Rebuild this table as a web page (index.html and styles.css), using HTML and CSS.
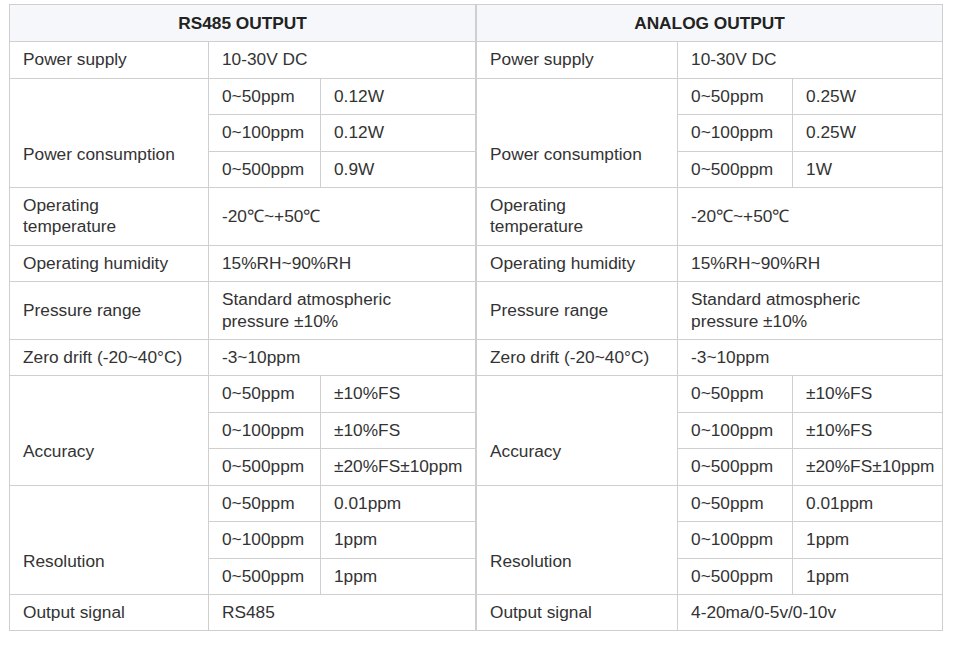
FILE: index.html
```html
<!DOCTYPE html>
<html>
<head>
<meta charset="utf-8">
<link rel="stylesheet" href="styles.css">
</head>
<body>
<div class="wrap">
  <table class="spec spec-left">
    <colgroup><col class="c1l"><col class="c2l"><col class="c3l"></colgroup>
    <thead>
      <tr><th colspan="3">RS485 OUTPUT</th></tr>
    </thead>
    <tbody>
      <tr><td>Power supply</td><td colspan="2">10-30V DC</td></tr>
      <tr><td rowspan="3" class="low">Power consumption</td><td>0~50ppm</td><td>0.12W</td></tr>
      <tr><td>0~100ppm</td><td>0.12W</td></tr>
      <tr><td>0~500ppm</td><td>0.9W</td></tr>
      <tr><td>Operating temperature</td><td colspan="2">-20℃~+50℃</td></tr>
      <tr><td>Operating humidity</td><td colspan="2">15%RH~90%RH</td></tr>
      <tr><td>Pressure range</td><td colspan="2">Standard atmospheric pressure ±10%</td></tr>
      <tr><td>Zero drift (-20~40°C)</td><td colspan="2">-3~10ppm</td></tr>
      <tr><td rowspan="3" class="low">Accuracy</td><td>0~50ppm</td><td>±10%FS</td></tr>
      <tr><td>0~100ppm</td><td>±10%FS</td></tr>
      <tr><td>0~500ppm</td><td>±20%FS±10ppm</td></tr>
      <tr><td rowspan="3" class="low">Resolution</td><td>0~50ppm</td><td>0.01ppm</td></tr>
      <tr><td>0~100ppm</td><td>1ppm</td></tr>
      <tr><td>0~500ppm</td><td>1ppm</td></tr>
      <tr><td>Output signal</td><td colspan="2">RS485</td></tr>
    </tbody>
  </table>
  <table class="spec spec-right">
    <colgroup><col class="c1r"><col class="c2r"><col class="c3r"></colgroup>
    <thead>
      <tr><th colspan="3">ANALOG OUTPUT</th></tr>
    </thead>
    <tbody>
      <tr><td>Power supply</td><td colspan="2">10-30V DC</td></tr>
      <tr><td rowspan="3" class="low">Power consumption</td><td>0~50ppm</td><td>0.25W</td></tr>
      <tr><td>0~100ppm</td><td>0.25W</td></tr>
      <tr><td>0~500ppm</td><td>1W</td></tr>
      <tr><td>Operating temperature</td><td colspan="2">-20℃~+50℃</td></tr>
      <tr><td>Operating humidity</td><td colspan="2">15%RH~90%RH</td></tr>
      <tr><td>Pressure range</td><td colspan="2">Standard atmospheric pressure ±10%</td></tr>
      <tr><td>Zero drift (-20~40°C)</td><td colspan="2">-3~10ppm</td></tr>
      <tr><td rowspan="3" class="low">Accuracy</td><td>0~50ppm</td><td>±10%FS</td></tr>
      <tr><td>0~100ppm</td><td>±10%FS</td></tr>
      <tr><td>0~500ppm</td><td>±20%FS±10ppm</td></tr>
      <tr><td rowspan="3" class="low">Resolution</td><td>0~50ppm</td><td>0.01ppm</td></tr>
      <tr><td>0~100ppm</td><td>1ppm</td></tr>
      <tr><td>0~500ppm</td><td>1ppm</td></tr>
      <tr><td>Output signal</td><td colspan="2">4-20ma/0-5v/0-10v</td></tr>
    </tbody>
  </table>
</div>
</body>
</html>
```

FILE: styles.css
```css
html, body {
  margin: 0;
  padding: 0;
  background: #ffffff;
}

body {
  font-family: "Liberation Sans", Arial, sans-serif;
  font-size: 17.3px;
  color: #333333;
}

.wrap {
  display: flex;
  align-items: flex-start;
  padding: 4px 0 0 9px;
}

.spec {
  border-collapse: collapse;
  table-layout: fixed;
  border: 1px solid #cfcfcf;
}

.spec-left { width: 466px; }
.spec-right { width: 466px; }

.c1l { width: 199px; }
.c2l { width: 112px; }
.c3l { width: 155px; }

.c1r { width: 201px; }
.c2r { width: 115px; }
.c3r { width: 150px; }

.spec th,
.spec td {
  border: 1px solid #cfcfcf;
  padding: 7px 18px 7px 13px;
  line-height: 21.4px;
  vertical-align: middle;
  text-align: left;
  white-space: normal;
}

.spec th {
  background: #f5f7fa;
  font-weight: bold;
  text-align: center;
  color: #222222;
  padding: 7.5px 13px;
}

.spec td.low {
  padding-top: 50px;
}
```
